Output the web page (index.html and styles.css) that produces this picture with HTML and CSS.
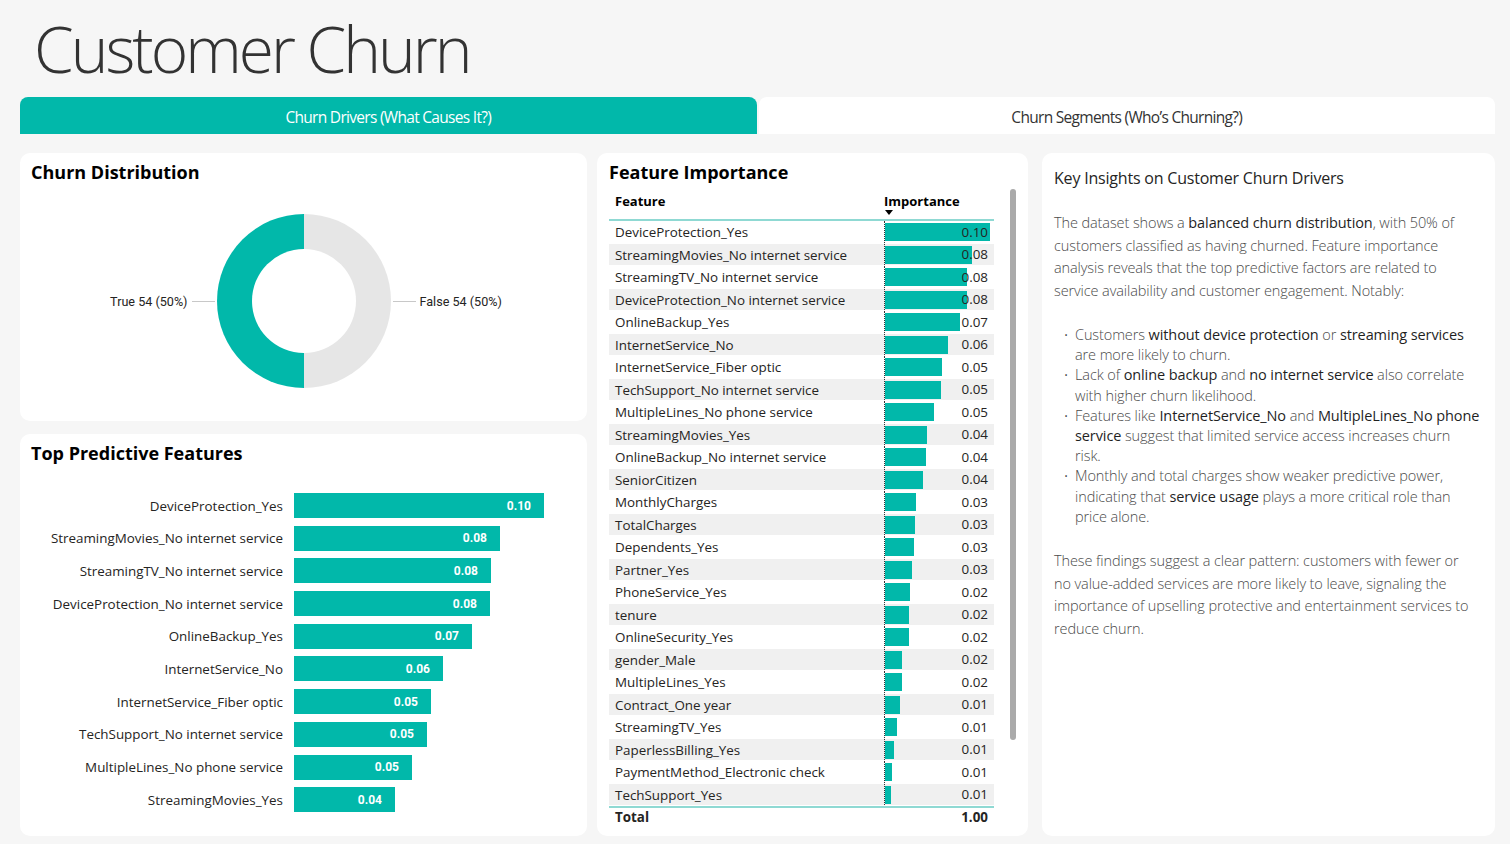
FILE: index.html
```html
<!DOCTYPE html>
<html lang="en">
<head>
<meta charset="utf-8">
<title>Customer Churn</title>
<link rel="stylesheet" href="styles.css">
</head>
<body>
<div class="page">
  <header class="header">
    <h1 class="title">Customer Churn</h1>
  </header>
  <nav class="tabs">
    <div class="tab tab-active">Churn Drivers (What Causes It?)</div>
    <div class="tab">Churn Segments (Who’s Churning?)</div>
  </nav>
  <main class="grid">
    <div class="col col-left">
      <section class="card card-donut">
        <h2 class="card-title">Churn Distribution</h2>
        <div class="donut-area">
          <div class="donut-side donut-side-left">
            <span class="donut-label">True 54 (50%)</span>
            <span class="leader"></span>
          </div>
          <div class="donut"></div>
          <div class="donut-side donut-side-right">
            <span class="leader"></span>
            <span class="donut-label">False 54 (50%)</span>
          </div>
        </div>
      </section>
      <section class="card card-bars">
        <h2 class="card-title">Top Predictive Features</h2>
        <div class="bars">
          <div class="bar-row"><span class="bar-label">DeviceProtection_Yes</span><div class="bar" style="width:250px"><span>0.10</span></div></div>
          <div class="bar-row"><span class="bar-label">StreamingMovies_No internet service</span><div class="bar" style="width:206px"><span>0.08</span></div></div>
          <div class="bar-row"><span class="bar-label">StreamingTV_No internet service</span><div class="bar" style="width:197px"><span>0.08</span></div></div>
          <div class="bar-row"><span class="bar-label">DeviceProtection_No internet service</span><div class="bar" style="width:196px"><span>0.08</span></div></div>
          <div class="bar-row"><span class="bar-label">OnlineBackup_Yes</span><div class="bar" style="width:178px"><span>0.07</span></div></div>
          <div class="bar-row"><span class="bar-label">InternetService_No</span><div class="bar" style="width:149px"><span>0.06</span></div></div>
          <div class="bar-row"><span class="bar-label">InternetService_Fiber optic</span><div class="bar" style="width:137px"><span>0.05</span></div></div>
          <div class="bar-row"><span class="bar-label">TechSupport_No internet service</span><div class="bar" style="width:133px"><span>0.05</span></div></div>
          <div class="bar-row"><span class="bar-label">MultipleLines_No phone service</span><div class="bar" style="width:118px"><span>0.05</span></div></div>
          <div class="bar-row"><span class="bar-label">StreamingMovies_Yes</span><div class="bar" style="width:101px"><span>0.04</span></div></div>
        </div>
      </section>
    </div>
    <section class="card card-table">
      <h2 class="card-title">Feature Importance</h2>
      <div class="table-wrap">
        <div class="table">
          <div class="thead">
            <div class="th th-feature">Feature</div>
            <div class="th th-imp">Importance<span class="sort-arrow"></span></div>
          </div>
          <div class="tbody">
            <div class="tr"><div class="td">DeviceProtection_Yes</div><div class="td td-imp"><i style="width:105px"></i><span>0.10</span></div></div>
            <div class="tr"><div class="td">StreamingMovies_No internet service</div><div class="td td-imp"><i style="width:87px"></i><span>0.08</span></div></div>
            <div class="tr"><div class="td">StreamingTV_No internet service</div><div class="td td-imp"><i style="width:82px"></i><span>0.08</span></div></div>
            <div class="tr"><div class="td">DeviceProtection_No internet service</div><div class="td td-imp"><i style="width:82px"></i><span>0.08</span></div></div>
            <div class="tr"><div class="td">OnlineBackup_Yes</div><div class="td td-imp"><i style="width:75px"></i><span>0.07</span></div></div>
            <div class="tr"><div class="td">InternetService_No</div><div class="td td-imp"><i style="width:63px"></i><span>0.06</span></div></div>
            <div class="tr"><div class="td">InternetService_Fiber optic</div><div class="td td-imp"><i style="width:57px"></i><span>0.05</span></div></div>
            <div class="tr"><div class="td">TechSupport_No internet service</div><div class="td td-imp"><i style="width:56px"></i><span>0.05</span></div></div>
            <div class="tr"><div class="td">MultipleLines_No phone service</div><div class="td td-imp"><i style="width:49px"></i><span>0.05</span></div></div>
            <div class="tr"><div class="td">StreamingMovies_Yes</div><div class="td td-imp"><i style="width:42px"></i><span>0.04</span></div></div>
            <div class="tr"><div class="td">OnlineBackup_No internet service</div><div class="td td-imp"><i style="width:41px"></i><span>0.04</span></div></div>
            <div class="tr"><div class="td">SeniorCitizen</div><div class="td td-imp"><i style="width:38px"></i><span>0.04</span></div></div>
            <div class="tr"><div class="td">MonthlyCharges</div><div class="td td-imp"><i style="width:31px"></i><span>0.03</span></div></div>
            <div class="tr"><div class="td">TotalCharges</div><div class="td td-imp"><i style="width:30px"></i><span>0.03</span></div></div>
            <div class="tr"><div class="td">Dependents_Yes</div><div class="td td-imp"><i style="width:29px"></i><span>0.03</span></div></div>
            <div class="tr"><div class="td">Partner_Yes</div><div class="td td-imp"><i style="width:27px"></i><span>0.03</span></div></div>
            <div class="tr"><div class="td">PhoneService_Yes</div><div class="td td-imp"><i style="width:25px"></i><span>0.02</span></div></div>
            <div class="tr"><div class="td">tenure</div><div class="td td-imp"><i style="width:24px"></i><span>0.02</span></div></div>
            <div class="tr"><div class="td">OnlineSecurity_Yes</div><div class="td td-imp"><i style="width:24px"></i><span>0.02</span></div></div>
            <div class="tr"><div class="td">gender_Male</div><div class="td td-imp"><i style="width:17px"></i><span>0.02</span></div></div>
            <div class="tr"><div class="td">MultipleLines_Yes</div><div class="td td-imp"><i style="width:17px"></i><span>0.02</span></div></div>
            <div class="tr"><div class="td">Contract_One year</div><div class="td td-imp"><i style="width:15px"></i><span>0.01</span></div></div>
            <div class="tr"><div class="td">StreamingTV_Yes</div><div class="td td-imp"><i style="width:12px"></i><span>0.01</span></div></div>
            <div class="tr"><div class="td">PaperlessBilling_Yes</div><div class="td td-imp"><i style="width:9px"></i><span>0.01</span></div></div>
            <div class="tr"><div class="td">PaymentMethod_Electronic check</div><div class="td td-imp"><i style="width:7px"></i><span>0.01</span></div></div>
            <div class="tr"><div class="td">TechSupport_Yes</div><div class="td td-imp"><i style="width:6px"></i><span>0.01</span></div></div>
          </div>
          <div class="tfoot">
            <div class="tf">Total</div>
            <div class="tf tf-imp">1.00</div>
          </div>
        </div>
        <div class="scrollbar"><div class="thumb"></div></div>
      </div>
    </section>
    <section class="card card-text">
      <h2 class="text-title">Key Insights on Customer Churn Drivers</h2>
      <p class="para">The dataset shows a <b>balanced churn distribution</b>, with 50% of<br>customers classified as having churned. Feature importance<br>analysis reveals that the top predictive factors are related to<br>service availability and customer engagement. Notably:</p>
      <ul class="list">
        <li>Customers <b>without device protection</b> or <b>streaming services</b><br>are more likely to churn.</li>
        <li>Lack of <b>online backup</b> and <b>no internet service</b> also correlate<br>with higher churn likelihood.</li>
        <li>Features like <b>InternetService_No</b> and <b>MultipleLines_No phone<br>service</b> suggest that limited service access increases churn<br>risk.</li>
        <li>Monthly and total charges show weaker predictive power,<br>indicating that <b>service usage</b> plays a more critical role than<br>price alone.</li>
      </ul>
      <p class="para">These findings suggest a clear pattern: customers with fewer or<br>no value-added services are more likely to leave, signaling the<br>importance of upselling protective and entertainment services to<br>reduce churn.</p>
    </section>
  </main>
</div>
</body>
</html>
```

FILE: styles.css
```css
* { box-sizing: border-box; }
html, body { margin: 0; padding: 0; }
body {
  background: #f6f6f6;
  font-family: "Open Sans", "Noto Sans", sans-serif;
  color: #252423;
  width: 1510px;
  height: 844px;
  overflow: hidden;
}
.page { padding: 0 15px 0 20px; }
.header { height: 97px; display: flex; align-items: flex-start; }
.title {
  margin: 9px 0 0 14px;
  font-weight: 300;
  font-size: 64px;
  line-height: 80px;
  color: #333;
  letter-spacing: -3px;
}
.tabs { display: flex; gap: 2px; height: 37px; }
.tab {
  flex: 1;
  display: flex;
  align-items: center;
  justify-content: center;
  background: #fff;
  border-radius: 8px 8px 0 0;
  font-size: 15.5px;
  letter-spacing: -0.7px;
  color: #333;
  padding-top: 2px;
}
.tab-active { background: #01b8aa; color: #fff; }

.grid {
  margin-top: 19px;
  display: grid;
  grid-template-columns: 567px 431px 457px;
  column-gap: 10px;
  height: 683px;
}
.col-left { display: flex; flex-direction: column; gap: 13px; }
.card {
  background: #fff;
  border-radius: 10px;
  padding: 7px 11px;
}
.card-donut { height: 268px; }
.card-bars { flex: 1; }
.card-text { margin-left: 4px; padding: 9px 12px; }
.card-title {
  margin: 0;
  font-size: 18px;
  font-weight: 700;
  line-height: 24px;
  color: #000;
}

/* donut */
.donut-area {
  display: grid;
  grid-template-columns: 1fr auto 1fr;
  align-items: center;
  margin-top: 30px;
}
.donut-side { display: flex; align-items: center; }
.donut-side-left { justify-content: flex-end; }
.donut-label { font-family: Roboto, "DejaVu Sans", sans-serif; font-size: 12.6px; color: #252423; }
.leader { width: 23px; height: 1px; background: #c8c8c8; margin: 0 2px 0 4px; }
.donut-side-right .leader { margin: 0 4px 0 2px; }
.donut {
  width: 174px; height: 174px; border-radius: 50%;
  background: conic-gradient(#e6e6e6 0 50%, #01b8aa 50% 100%);
  display: flex; align-items: center; justify-content: center;
}
.donut::after {
  content: ""; width: 104px; height: 104px; border-radius: 50%; background: #fff;
}

/* bar chart */
.bars { margin-top: 28px; display: flex; flex-direction: column; gap: 7.7px; }
.bar-row { display: flex; align-items: center; gap: 11px; height: 25px; }
.bar-label { width: 252px; text-align: right; font-size: 13.4px; color: #252423; white-space: nowrap; }
.bar {
  height: 25px; background: #01b8aa;
  display: flex; align-items: center; justify-content: flex-end;
  padding-right: 13px;
}
.bar span { color: #fff; font-family: Roboto, sans-serif; font-weight: 700; font-size: 12px; }

/* table */
.card-table { padding: 7px 12px; }
.table-wrap { display: flex; gap: 16px; margin-top: 5px; }
.table { width: 386px; }
.thead { display: flex; height: 32px; border-bottom: 2px solid #8fd9d3; }
.th { font-weight: 700; font-size: 13px; color: #000; padding-top: 3px; position: relative; }
.th-feature { width: 275px; padding-left: 6px; }
.th-imp { flex: 1; }
.sort-arrow {
  position: absolute; left: 1px; top: 21px;
  border-left: 4px solid transparent; border-right: 4px solid transparent; border-top: 5px solid #000;
}
.tr { display: flex; height: 22.5px; border-bottom: 1px solid #fff; }
.tr:nth-child(even) { background: #f0f0f0; }
.td { width: 275px; padding-left: 6px; font-size: 13.4px; line-height: 22px; color: #252423; white-space: nowrap; }
.td-imp {
  flex: 1; width: auto; padding: 0; position: relative;
  border-left: 1px dotted #333;
  display: flex; align-items: center; justify-content: flex-end;
}
.td-imp i { position: absolute; left: 0; top: 2px; height: 18px; background: #01b8aa; }
.td-imp span { position: relative; padding-right: 6px; }
.tfoot { display: flex; border-top: 2px solid #8fd9d3; height: 20px; align-items: center; }
.tf { font-weight: 700; font-size: 13.4px; color: #252423; }
.tf:first-child { width: 275px; padding-left: 6px; }
.tf-imp { flex: 1; text-align: right; padding-right: 6px; }
.scrollbar { width: 6px; padding-top: 0; }
.thumb { width: 6px; height: 551px; background: #aaa; border-radius: 3px; }

/* text */
.text-title { margin: 4px 0 0; font-size: 16px; font-weight: 400; color: #252423; line-height: 24px; letter-spacing: -0.2px; }
.para { margin: 22px 0 0; font-size: 14.5px; font-weight: 300; line-height: 22.5px; color: #4a4a4a; letter-spacing: -0.1px; }
.para b, .list b { font-weight: 400; color: #1f1f1f; }
.list { margin: 23px 0 0; padding: 0 0 0 10px; list-style: none; font-size: 14.5px; font-weight: 300; line-height: 20.2px; color: #4a4a4a; letter-spacing: -0.1px; }
.list li { padding-left: 11px; position: relative; }
.list li::before { content: "•"; position: absolute; left: 0; top: 0; font-size: 11px; }
.list + .para { margin-top: 23px; }
```
